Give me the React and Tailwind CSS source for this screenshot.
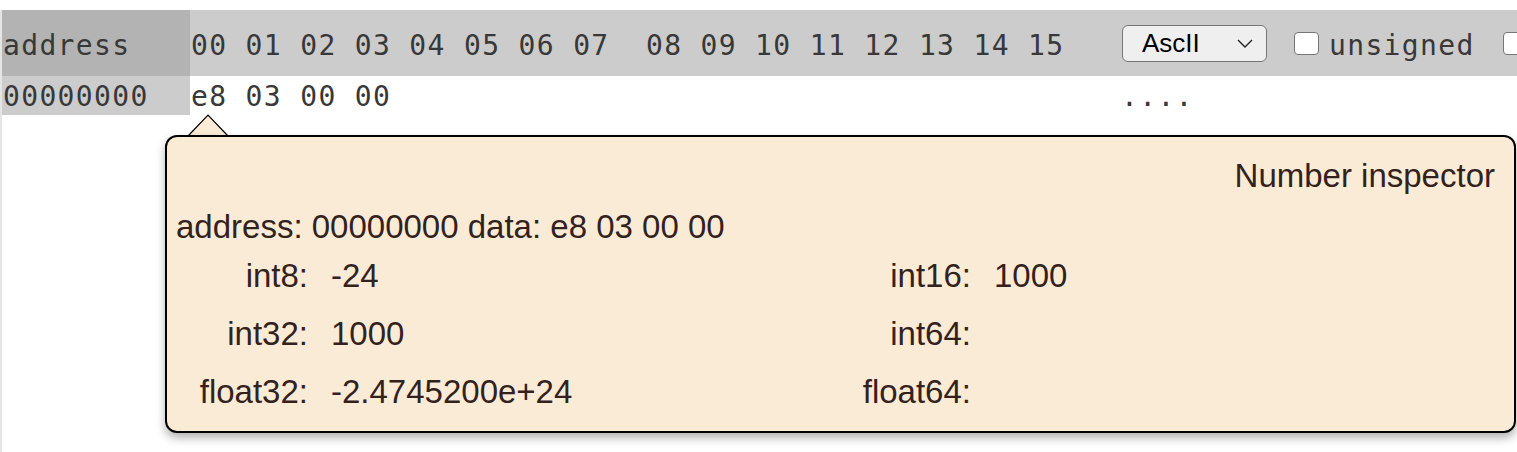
import React from "react";

const mono = { fontFamily: '"DejaVu Sans Mono", monospace' };
const sans = { fontFamily: '"Liberation Sans", Arial, sans-serif' };

const rows = [
  ["int8:", "-24", "int16:", "1000"],
  ["int32:", "1000", "int64:", ""],
  ["float32:", "-2.4745200e+24", "float64:", ""],
];

const Checkbox = () => (
  <div className="w-[25px] h-[23px] shrink-0 rounded-[4px] border border-[#767676] bg-white" />
);

const App = () => {
  return (
    <div className="bg-white min-h-screen pt-[10px] overflow-hidden">
      <div className="relative h-[442px] border-l-2 border-[#e5e5e5]" style={mono}>
        {/* header */}
        <div className="flex items-stretch h-[66px] bg-[#cccccc] text-[28px] tracking-[1.34px] leading-[33px] text-[#383838] whitespace-pre">
          <div className="w-[188px] shrink-0 bg-[#b3b3b3] pl-[1px] pt-[4px] flex items-center">address</div>
          <div className="w-[931px] shrink-0 pl-[1px] pt-[4px] flex items-center">
            00 01 02 03 04 05 06 07  08 09 10 11 12 13 14 15
          </div>
          <div className="flex items-center shrink-0">
            <div
              className="ml-[1px] w-[145px] h-[37px] rounded-[6px] border border-[#767676] bg-[#efefef] flex items-center justify-between pl-[19px] pr-[13px] text-black text-[26px] tracking-normal"
              style={sans}
            >
              <span className="leading-none">AscII</span>
              <svg width="16" height="9" viewBox="0 0 16 9" fill="none">
                <path d="M1 1 L8 8 L15 1" stroke="#222" strokeWidth="1.4" />
              </svg>
            </div>
            <div className="ml-[27px]">
              <Checkbox />
            </div>
            <span className="ml-[10px] pt-[4px]">unsigned</span>
            <div className="ml-[28px]">
              <Checkbox />
            </div>
          </div>
        </div>

        {/* data row */}
        <div className="flex items-stretch h-[39px] text-[28px] tracking-[1.34px] leading-[33px] text-[#383838] whitespace-pre">
          <div className="w-[188px] shrink-0 bg-[#cccccc] pl-[1px] pt-[2px] flex items-center">00000000</div>
          <div className="w-[931px] shrink-0 pl-[1px] pt-[2px] flex items-center">e8 03 00 00</div>
          <div className="flex items-center pt-[2px]">....</div>
        </div>

        {/* tooltip arrow */}
        <svg className="absolute left-[184px] top-[103px]" width="44" height="24" viewBox="0 0 44 24">
          <polygon points="2,23 22,2 42,23" fill="#faebd7" stroke="#000" strokeWidth="1.2" />
        </svg>

        {/* number inspector */}
        <div
          className="absolute left-[163px] right-[1px] top-[125px] rounded-[12px] border-2 border-black bg-[#faebd7] text-[#33221c] text-[33px] pt-[19px] pb-[10px] shadow-[0_5px_10px_rgba(0,0,0,0.3)]"
          style={sans}
        >
          <div className="leading-[40px] text-right pr-[19px]">Number inspector</div>
          <div className="leading-[40px] mt-[11px] pl-[9px]">address: 00000000 data: e8 03 00 00</div>
          <div className="grid grid-cols-[141px_497px_120px_1fr] gap-x-[23px] leading-[58px]">
            {rows.map((r, i) => (
              <React.Fragment key={i}>
                <div className="text-right whitespace-nowrap">{r[0]}</div>
                <div className="whitespace-nowrap">{r[1]}</div>
                <div className="text-right whitespace-nowrap">{r[2]}</div>
                <div className="whitespace-nowrap">{r[3]}</div>
              </React.Fragment>
            ))}
          </div>
        </div>
      </div>
    </div>
  );
};

export default App;
